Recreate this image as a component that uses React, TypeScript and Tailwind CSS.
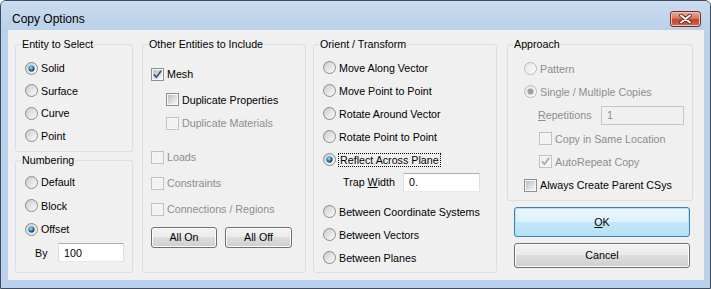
import React, { useId } from "react";

const dis = "text-[#8d8d8d]";

function Radio({ checked = false, disabled = false }: { checked?: boolean; disabled?: boolean }) {
  const id = useId().replace(/[^a-zA-Z0-9]/g, "");
  return (
    <svg width="13" height="13" viewBox="0 0 13 13" className="shrink-0">
      <defs>
        <linearGradient id={`${id}f`} x1="0" y1="0" x2="1" y2="1">
          <stop offset="0" stopColor={disabled ? "#e2e2e2" : "#c9c9c9"} />
          <stop offset="1" stopColor="#ffffff" />
        </linearGradient>
        <radialGradient id={`${id}d`} cx="0.42" cy="0.38" r="0.62">
          <stop offset="0" stopColor="#a8ecff" />
          <stop offset="0.45" stopColor="#3898cf" />
          <stop offset="1" stopColor="#0b2f5e" />
        </radialGradient>
      </defs>
      <circle cx="6.5" cy="6.5" r="6" fill={`url(#${id}f)`} stroke={disabled ? "#b9b9b9" : "#8a8a8a"} />
      {checked && <circle cx="6.5" cy="6.5" r="3.1" fill={disabled ? "#a2a2a2" : `url(#${id}d)`} />}
    </svg>
  );
}

function Check({ checked = false, disabled = false }: { checked?: boolean; disabled?: boolean }) {
  const id = useId().replace(/[^a-zA-Z0-9]/g, "");
  return (
    <svg width="13" height="13" viewBox="0 0 13 13" className="shrink-0">
      <defs>
        <linearGradient id={`${id}g`} x1="0" y1="0" x2="1" y2="1">
          <stop offset="0" stopColor="#b9bec6" />
          <stop offset="1" stopColor="#f7f7f7" />
        </linearGradient>
      </defs>
      <rect x="0.5" y="0.5" width="12" height="12" fill="#f6f6f6" stroke={disabled ? "#c1c1c1" : "#8e8f8f"} />
      <rect x="2" y="2" width="9" height="9" fill={disabled ? "#f2f2f2" : `url(#${id}g)`} />
      {checked && (
        <path
          d="M3.3 6.8 L5.4 9.3 L9.8 3.2"
          fill="none"
          stroke={disabled ? "#a9a9a9" : "#3c4f8e"}
          strokeWidth="1.7"
          strokeLinecap="round"
          strokeLinejoin="round"
        />
      )}
    </svg>
  );
}

function Group({ title, className, children }: { title: string; className: string; children: React.ReactNode }) {
  return (
    <fieldset className={`border border-[#d5dfe5] rounded-[3px] ${className}`}>
      <legend className="ml-[5px] px-[1px] leading-[14px]">{title}</legend>
      {children}
    </fieldset>
  );
}

function Label({ children, disabled = false }: { children: React.ReactNode; disabled?: boolean }) {
  return <span className={`ml-[3px] whitespace-nowrap leading-[14px] ${disabled ? dis : ""}`}>{children}</span>;
}

function TextBox({ value, width, disabled = false }: { value: string; width: string; disabled?: boolean }) {
  return (
    <div
      className={`${width} h-[19px] border flex items-center pl-[5px] ${
        disabled
          ? "bg-[#f0f0f0] border-[#c3c6cb] text-[#8d8d8d]"
          : "bg-white border-t-[#abadb3] border-x-[#dbdfe6] border-b-[#e3e9ef]"
      }`}
    >
      {value}
    </div>
  );
}

const btn =
  "flex items-center justify-center rounded-[3px] border border-[#707070] shadow-[inset_0_0_0_1px_#fcfcfc] bg-[linear-gradient(to_bottom,#f2f2f2_0%,#ebebeb_50%,#dddddd_50%,#cfcfcf_100%)]";

export default function App() {
  return (
    <div className="w-[711px] h-[289px] bg-[#b9d1ea] border border-[#3e4c5e] rounded-t-[6px] flex flex-col font-['Liberation_Sans',Arial,sans-serif] text-[10.7px] text-black select-none">
      {/* title bar */}
      <div className="h-[29px] shrink-0 flex items-start justify-between pl-[11px] pr-[9px] rounded-t-[5px] bg-[linear-gradient(to_bottom,#cadcf0,#b9d1ea)]">
        <span className="text-[12px] leading-[16px] mt-[10px] text-black">Copy Options</span>
        <div className="mt-[10px] w-[31px] h-[16px] rounded-[3px] border border-[#7a2f22] shadow-[inset_0_0_0_1px_#eec0b4] bg-[linear-gradient(to_bottom,#e9aa9b_0%,#d97561_45%,#c4432c_55%,#cf6b55_100%)] flex items-center justify-center">
          <svg width="13" height="10" viewBox="0 0 13 10">
            <path d="M2 1.5 L11 8.5 M11 1.5 L2 8.5" stroke="#5a2319" strokeWidth="3.6" strokeLinecap="round" />
            <path d="M2 1.5 L11 8.5 M11 1.5 L2 8.5" stroke="#ffffff" strokeWidth="2" strokeLinecap="round" />
          </svg>
        </div>
      </div>

      {/* client area */}
      <div className="h-[250px] ml-[7px] mr-[6px] bg-[#f0f0f0] flex pt-[7px] pl-[7px]">
        {/* column 1 */}
        <div className="flex flex-col w-[118px]">
          <Group title="Entity to Select" className="h-[115px]">
            <div className="pt-[6px] pl-[9px]">
              {["Solid", "Surface", "Curve", "Point"].map((t, i) => (
                <div key={t} className="h-[22.5px] flex items-center">
                  <Radio checked={i === 0} />
                  <Label>{t}</Label>
                </div>
              ))}
            </div>
          </Group>
          <Group title="Numbering" className="mt-[1px] h-[120px]">
            <div className="pt-[3.5px] pl-[9px]">
              {["Default", "Block", "Offset"].map((t, i) => (
                <div key={t} className="h-[23.5px] flex items-center">
                  <Radio checked={i === 2} />
                  <Label>{t}</Label>
                </div>
              ))}
              <div className="h-[23.5px] flex items-center">
                <span className="w-[33px] pl-[10px]">By</span>
                <TextBox value="100" width="w-[66px]" />
              </div>
            </div>
          </Group>
        </div>

        {/* column 2 */}
        <Group title="Other Entities to Include" className="ml-[9px] w-[164px] h-[236px]">
          <div className="pt-[10px] pl-[8px] flex flex-col">
            <div className="h-[26px] flex items-center">
              <Check checked />
              <Label>Mesh</Label>
            </div>
            <div className="h-[25px] flex items-center pl-[15px]">
              <Check />
              <Label>Duplicate Properties</Label>
            </div>
            <div className="h-[22px] flex items-center pl-[15px]">
              <Check disabled />
              <Label disabled>Duplicate Materials</Label>
            </div>
            <div className="mt-[10px] h-[26px] flex items-center">
              <Check disabled />
              <Label disabled>Loads</Label>
            </div>
            <div className="h-[26px] flex items-center">
              <Check disabled />
              <Label disabled>Constraints</Label>
            </div>
            <div className="h-[26px] flex items-center">
              <Check disabled />
              <Label disabled>Connections / Regions</Label>
            </div>
            <div className="mt-[5px] flex gap-[8px] pl-[-1px]">
              <div className={`${btn} w-[66px] h-[21px]`}>All On</div>
              <div className={`${btn} w-[67px] h-[21px]`}>All Off</div>
            </div>
          </div>
        </Group>

        {/* column 3 */}
        <Group title="Orient / Transform" className="ml-[7px] w-[184px] h-[236px]">
          <div className="pt-[5px] pl-[9px] flex flex-col">
            {["Move Along Vector", "Move Point to Point", "Rotate Around Vector", "Rotate Point to Point"].map((t) => (
              <div key={t} className="h-[23px] flex items-center">
                <Radio />
                <Label>{t}</Label>
              </div>
            ))}
            <div className="h-[23px] flex items-center">
              <Radio checked />
              <span className="ml-[3px] px-[1px] leading-[12px] outline-1 outline-dotted outline-black whitespace-nowrap">
                Reflect Across Plane
              </span>
            </div>
            <div className="h-[23px] flex items-center">
              <span className="w-[80px] pl-[20px] whitespace-nowrap">
                Trap <u>W</u>idth
              </span>
              <TextBox value="0." width="w-[77px]" />
            </div>
            <div className="mt-[6px]">
              {["Between Coordinate Systems", "Between Vectors", "Between Planes"].map((t) => (
                <div key={t} className="h-[23px] flex items-center">
                  <Radio />
                  <Label>{t}</Label>
                </div>
              ))}
            </div>
          </div>
        </Group>

        {/* column 4 */}
        <div className="ml-[10px] w-[186px] flex flex-col">
          <Group title="Approach" className="h-[164px]">
            <div className="pt-[6px] pl-[16px] flex flex-col">
              <div className="h-[23.3px] flex items-center">
                <Radio disabled />
                <Label disabled>Pattern</Label>
              </div>
              <div className="h-[23.3px] flex items-center">
                <Radio checked disabled />
                <Label disabled>Single / Multiple Copies</Label>
              </div>
              <div className="h-[23.3px] flex items-center">
                <span className={`w-[77px] pl-[14px] whitespace-nowrap ${dis}`}>
                  <u>R</u>epetitions
                </span>
                <TextBox value="1" width="w-[83px]" disabled />
              </div>
              <div className="h-[23.3px] flex items-center pl-[15px]">
                <Check disabled />
                <Label disabled>Copy in Same Location</Label>
              </div>
              <div className="h-[23.3px] flex items-center pl-[15px]">
                <Check checked disabled />
                <Label disabled>AutoRepeat Copy</Label>
              </div>
              <div className="h-[23.3px] flex items-center">
                <Check />
                <Label>Always Create Parent CSys</Label>
              </div>
            </div>
          </Group>
          <div className="ml-[7px] mt-[6px] w-[176px] h-[30px] flex items-center justify-center rounded-[3px] border border-[#3c7fb1] shadow-[inset_0_0_0_1px_#b6e2f8] bg-[linear-gradient(to_bottom,#eaf6fd_0%,#dcf1fc_50%,#c5e8fa_50%,#b4def6_100%)]">
            <span>
              <u>O</u>K
            </span>
          </div>
          <div className={`${btn} ml-[7px] mt-[6px] w-[176px] h-[25px]`}>Cancel</div>
        </div>
      </div>
    </div>
  );
}
